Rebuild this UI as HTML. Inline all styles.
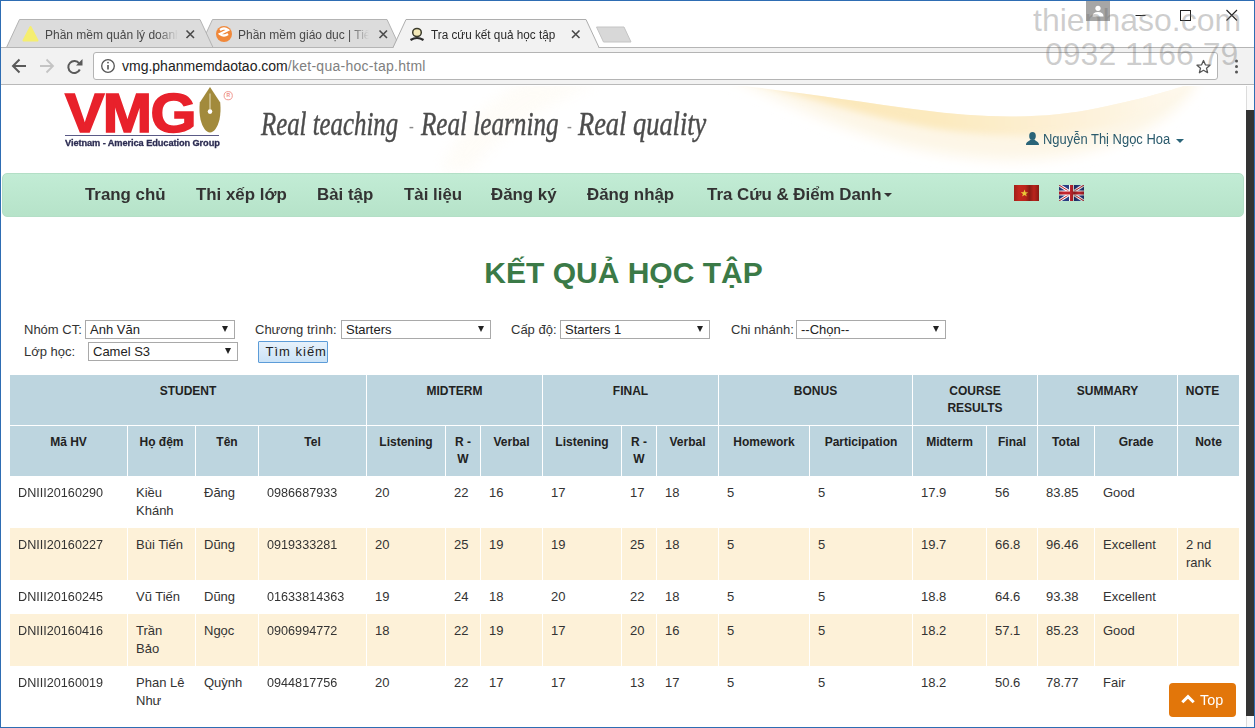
<!DOCTYPE html>
<html lang="vi">
<head>
<meta charset="utf-8">
<title>Tra cứu kết quả học tập</title>
<style>
*{box-sizing:border-box;margin:0;padding:0}
html,body{width:1255px;height:728px;overflow:hidden;background:#fff;font-family:"Liberation Sans",sans-serif;}
.abs{position:absolute}
.t{position:absolute;white-space:nowrap;line-height:1;transform-origin:0 0}
#win{position:absolute;left:0;top:0;width:1255px;height:728px;overflow:hidden;background:#fff}
/* chrome */
#chrome{position:absolute;left:0;top:0;width:1255px;height:86px;background:#fff}
#toolbar{position:absolute;left:1px;top:47px;width:1253px;height:38px;background:#f2f2f2;border-top:1px solid #b5b5b5;border-bottom:1px solid #b9b9b9}
#url{position:absolute;left:93px;top:52px;width:1125px;height:28px;background:#fff;border:1px solid #b4b4b4;border-radius:3px}
.tabtxt{font-size:12px;color:#484848}
/* page */
#page{position:absolute;left:1px;top:86px;width:1245px;height:641px;background:#fff;overflow:hidden}
#nav{position:absolute;left:1px;top:87px;width:1242px;height:44px;border-radius:5px;background:linear-gradient(#c2ecd5,#b6e3c9);border:1px solid #b3dfc6}
.nv{font-weight:bold;font-size:17px;color:#333;top:100px}
.lbl{font-size:13px;color:#333}
.sel{position:absolute;height:19px;width:150px;border:1px solid #a9a9a9;background:#fff;border-radius:0}
.sel span{position:absolute;left:4px;top:2px;font-size:13px;line-height:1;color:#222;white-space:nowrap}
.sel i{position:absolute;right:6px;top:5px;width:0;height:0;border-left:3.5px solid transparent;border-right:3.5px solid transparent;border-top:6px solid #222}
/* table */
#tbl{position:absolute;left:9px;top:289px;width:1230px;}
.c{position:absolute;font-size:13px;color:#333;line-height:18px}
.h{position:absolute;background:#bdd5df;font-weight:bold;font-size:12px;color:#222;text-align:center;line-height:17px;padding-top:8px}
.odd{position:absolute;left:9px;width:1230px;background:#fdf2d9}
</style>
</head>
<body>
<div id="win">
<div id="chrome">
<svg class="abs" style="left:0;top:0" width="1255" height="48" viewBox="0 0 1255 48">
<polygon points="199.5,47.5 212.5,19.5 387,19.5 400,47.5" fill="#dcdcdc" stroke="#b3b3b3" stroke-width="1"/>
<polygon points="6.5,47.5 19.5,19.5 200,19.5 213,47.5" fill="#dcdcdc" stroke="#b3b3b3" stroke-width="1"/>
<polygon points="596.5,27 624,27 631,42 603.5,42" fill="#d8d8d8" stroke="#c4c4c4" stroke-width="1"/>
<rect x="1086" y="1" width="24" height="20" fill="#a6a6a6"/>
<circle cx="1098" cy="8.3" r="2.6" fill="#fff"/><path d="M1092.5 16.5 q0 -4.5 5.5 -4.5 q5.5 0 5.5 4.5z" fill="#fff"/>
<path d="M1135.5 15.5h10" stroke="#222" stroke-width="1"/>
<rect x="1180.5" y="10.5" width="10" height="10" fill="none" stroke="#222" stroke-width="1"/>
<path d="M1226.5 10 l10.5 10.5 M1237 10 l-10.5 10.5" stroke="#222" stroke-width="1.1"/>
</svg>
<div id="toolbar"></div>
<svg class="abs" style="left:0;top:0" width="1255" height="49" viewBox="0 0 1255 49">
<polygon points="393,48.5 406,19.5 586,19.5 599,48.5" fill="#f2f2f2"/>
<polyline points="393,47.5 406,19.5 586,19.5 599,47.5" fill="none" stroke="#adadad" stroke-width="1"/>
<!-- favicons -->
<polygon points="30.500,27 37.500,40.500 23.500,40.500" fill="#f5ee70" stroke="#f5ee70" stroke-width="2" stroke-linejoin="round"/>
<circle cx="224" cy="34" r="8" fill="#f0883a"/>
<path d="M220 30 q4-3 8 0 q-6 3 -8 4 q4 3 8 0" stroke="#fff" stroke-width="2.2" fill="none"/>
<ellipse cx="417" cy="32.500" rx="4.300" ry="4" fill="#f4e9b8" stroke="#3b3b2b" stroke-width="1.500"/>
<path d="M410.500 40 q6.500-4 13 0" stroke="#2b2b2b" stroke-width="2.200" fill="none"/>
<!-- close x -->
<g stroke="#4a4a4a" stroke-width="1.6">
<path d="M186.500 30.5l7.5 7.5m0-7.500l-7.500 7.500"/>
<path d="M379.500 30.5l7.500 7.500m0-7.500l-7.500 7.500"/>
<path d="M572 30.5l7.500 7.500m0-7.500l-7.500 7.500"/>
</g>
</svg>
<span class="t tabtxt" style="left:45px;top:28px;width:133px;overflow:hidden;-webkit-mask-image:linear-gradient(90deg,#000 85%,transparent);line-height:14px;">Phần mềm quản lý doanh</span>
<span class="t tabtxt" style="left:238px;top:28px;width:131px;overflow:hidden;-webkit-mask-image:linear-gradient(90deg,#000 85%,transparent);line-height:14px;">Phần mềm giáo dục | Tiếng</span>
<span class="t tabtxt" style="left:431px;top:28px;line-height:14px;color:#2a2a2a;transform:scaleX(0.978);">Tra cứu kết quả học tập</span>
<svg class="abs" style="left:0;top:48px" width="1255" height="38" viewBox="0 48 1255 38">
<g fill="none" stroke="#5a5a5a" stroke-width="1.8">
<path d="M26 66H13.500M19.500 59.500L13 66l6.500 6.500" stroke-width="2"/>
<path d="M79.800 69.500a6 6 0 1 1 -.6-6" stroke-width="2"/>
</g>
<path d="M82.500 59v6.500h-6.500z" fill="#5a5a5a"/>
<g fill="none" stroke="#c4c4c4" stroke-width="1.800"><path d="M40 66h12.500M46.500 59.500L53 66l-6.500 6.500"/></g>
</svg>
<div id="url"></div>
<svg class="abs" style="left:0;top:48px" width="1255" height="38" viewBox="0 48 1255 38">
<circle cx="108" cy="66" r="6.300" fill="none" stroke="#555" stroke-width="1.300"/>
<path d="M108 65v4.500" stroke="#555" stroke-width="1.600"/><circle cx="108" cy="62.600" r="0.900" fill="#555"/>
<path d="M1203.500 60.500l1.900 4.300 4.600.4-3.500 3 1.100 4.500-4.100-2.400-4.100 2.400 1.100-4.500-3.500-3 4.600-.4z" fill="none" stroke="#555" stroke-width="1.300" stroke-linejoin="round"/>
<circle cx="1236.500" cy="61" r="1.500" fill="#555"/><circle cx="1236.500" cy="66.500" r="1.500" fill="#555"/><circle cx="1236.500" cy="72" r="1.500" fill="#555"/>
</svg>
<span class="t " style="left:122px;top:58px;font-size:14px;color:#222;line-height:16px;">vmg.phanmemdaotao.com<span style="color:#808080;letter-spacing:.27px">/ket-qua-hoc-tap.html</span></span>
<span class="t wm" style="left:1033px;top:2px;font-size:32px;line-height:37px;color:rgba(110,110,110,.34);z-index:50;">thienhaso.com</span>
<span class="t wm" style="left:1045px;top:35.5px;font-size:32px;line-height:37px;color:rgba(110,110,110,.34);z-index:50;">0932 1166 79</span>
</div>
<div id="page">
<svg class="abs" style="left:0;top:0" width="1245" height="90" viewBox="0 0 1245 90">
<defs>
<linearGradient id="swg" x1="745" y1="0" x2="1185" y2="0" gradientUnits="userSpaceOnUse"><stop offset="0" stop-color="#fbe6b6"/><stop offset=".45" stop-color="#fceabf"/><stop offset=".75" stop-color="#fdf1d8"/><stop offset="1" stop-color="#fef9ee"/></linearGradient>
<filter id="bl" x="-10%" y="-50%" width="120%" height="200%"><feGaussianBlur stdDeviation="3.5"/></filter>
<filter id="bl2" x="-10%" y="-50%" width="120%" height="200%"><feGaussianBlur stdDeviation="7"/></filter>
</defs>
<clipPath id="cpu"><path d="M700 -1 L734 -1 C 790 5, 860 16, 920 24 S 1040 34, 1097 22 S 1170 4, 1186 -1 L1245 -1 L1245 90 L700 90 Z"/></clipPath>
<g clip-path="url(#cpu)">
<path d="M720 -14 C 790 -6, 860 6, 920 14 S 1040 24, 1097 12 S 1170 -6, 1200 -14 C 1180 40, 1090 82, 980 72 S 800 22, 720 -14 Z" fill="#fdf6e6" filter="url(#bl2)"/>
<path d="M725 -12 C 790 -4, 860 8, 920 16 S 1040 26, 1097 14 S 1170 -4, 1196 -12 C 1160 36, 1080 56, 980 48 S 810 10, 725 -12 Z" fill="url(#swg)" filter="url(#bl)"/>
</g>
<path d="M520 -5 C 470 30, 450 55, 440 85 L 470 85 C 490 55, 540 20, 600 -5 Z" fill="#fdf5e4" opacity=".28" filter="url(#bl2)"/>
</svg>
<span class="t " style="left:63.5px;top:-3.5px;font-weight:bold;font-size:55px;line-height:60px;color:#e8212b;letter-spacing:-1.5px;-webkit-text-stroke:1.6px #e8212b;transform:scaleX(1.075);">VMG</span>
<svg class="abs" style="left:196px;top:0px" width="40" height="50" viewBox="197 86 40 50">
<path d="M210 87 L220.200 102.500 C220.700 108,220.700 114,219.500 119.500 C217.500 127.500,214 132.400,210 132.400 C206 132.400,202.500 127.500,200.500 119.500 C199.300 114,199.300 108,199.800 102.500 Z" fill="#a28a3c"/>
<path d="M210 93.500v17" stroke="#f3ecd2" stroke-width="0.900"/><circle cx="210" cy="111.600" r="2.300" fill="#fff"/>
<circle cx="228.200" cy="95.700" r="4.100" fill="none" stroke="#ee8f86" stroke-width="0.900"/>
</svg>
<span class="t " style="left:225.4px;top:7.3px;font-size:5px;font-weight:bold;color:#ee8f86;">R</span>
<div class="abs" style="left:64px;top:49px;width:154px;height:1px;background:#5a5a86"></div>
<span class="t " style="left:64px;top:51px;font-weight:bold;font-size:9.500px;color:#2c2c52;line-height:11px;letter-spacing:-.1px;-webkit-text-stroke:.3px #2c2c52;transform:scaleX(0.975);">Vietnam - America Education Group</span>
<span class="t slog" style="left:260px;top:19.5px;font-family:'Liberation Serif',serif;font-style:italic;font-size:33px;line-height:36px;color:#4c4c4c;-webkit-text-stroke:.45px #4c4c4c;transform:scaleX(0.752);">Real teaching</span>
<span class="t slog" style="left:407.5px;top:30px;font-family:'Liberation Serif',serif;font-size:18px;line-height:20px;color:#8a8a8a;transform:scaleX(0.8);">-</span>
<span class="t slog" style="left:419.5px;top:19.5px;font-family:'Liberation Serif',serif;font-style:italic;font-size:33px;line-height:36px;color:#4c4c4c;-webkit-text-stroke:.45px #4c4c4c;transform:scaleX(0.762);">Real learning</span>
<span class="t slog" style="left:565.5px;top:30px;font-family:'Liberation Serif',serif;font-size:18px;line-height:20px;color:#8a8a8a;transform:scaleX(0.8);">-</span>
<span class="t slog" style="left:577px;top:19.5px;font-family:'Liberation Serif',serif;font-style:italic;font-size:33px;line-height:36px;color:#4c4c4c;-webkit-text-stroke:.45px #4c4c4c;transform:scaleX(0.8);">Real quality</span>
<svg class="abs" style="left:1024px;top:46px" width="15" height="14" viewBox="0 0 15 14">
<ellipse cx="7.500" cy="4" rx="3.300" ry="3.900" fill="#2a6478"/>
<path d="M1 13 C1 9.500,4 9.500,5.500 7.500 h4 C11 9.500,14 9.500,14 13z" fill="#2a6478"/></svg>
<span class="t " style="left:1042px;top:45px;font-size:14px;line-height:16px;color:#2a5a6c;transform:scaleX(0.925);">Nguyễn Thị Ngọc Hoa</span>
<div class="abs" style="left:1175px;top:53px;border-left:4px solid transparent;border-right:4px solid transparent;border-top:4px solid #2a6478"></div>
<div id="nav"></div>
<span class="t nv" style="left:84px;top:99px;line-height:20px;transform:scaleX(0.992);">Trang chủ</span>
<span class="t nv" style="left:195px;top:99px;line-height:20px;transform:scaleX(0.992);">Thi xếp lớp</span>
<span class="t nv" style="left:316px;top:99px;line-height:20px;transform:scaleX(0.992);">Bài tập</span>
<span class="t nv" style="left:403px;top:99px;line-height:20px;transform:scaleX(0.992);">Tài liệu</span>
<span class="t nv" style="left:490px;top:99px;line-height:20px;transform:scaleX(0.992);">Đăng ký</span>
<span class="t nv" style="left:586px;top:99px;line-height:20px;transform:scaleX(0.992);">Đăng nhập</span>
<span class="t nv" style="left:706px;top:99px;line-height:20px;transform:scaleX(0.993);">Tra Cứu &amp; Điểm Danh</span>
<div class="abs" style="left:882.500px;top:107px;border-left:4px solid transparent;border-right:4px solid transparent;border-top:4px solid #333"></div>
<svg class="abs" style="left:1013px;top:99px" width="25" height="16" viewBox="0 0 25 16"><defs><linearGradient id="wv" x1="0" x2="1" y1="0" y2="0"><stop offset="0" stop-color="#000" stop-opacity=".18"/><stop offset=".2" stop-color="#000" stop-opacity="0"/><stop offset=".45" stop-color="#000" stop-opacity=".05"/><stop offset=".62" stop-color="#000" stop-opacity=".3"/><stop offset=".8" stop-color="#000" stop-opacity=".05"/><stop offset="1" stop-color="#000" stop-opacity=".3"/></linearGradient></defs><rect width="25" height="16" fill="#c4261d"/><polygon points="10.500,4.500 11.500,7.200 14.300,7.200 12,8.900 12.900,11.600 10.500,10 8.100,11.600 9,8.900 6.700,7.200 9.500,7.200" fill="#f6d13a"/><rect width="25" height="16" fill="url(#wv)"/></svg>
<svg class="abs" style="left:1058px;top:99px" width="25" height="16" viewBox="0 0 25 16"><rect width="25" height="16" fill="#2b3f86"/><path d="M0 0L25 16M25 0L0 16" stroke="#fff" stroke-width="3"/><path d="M0 0L25 16M25 0L0 16" stroke="#c8262f" stroke-width="1"/><path d="M12.500 0v16M0 8h25" stroke="#fff" stroke-width="5"/><path d="M12.500 0v16M0 8h25" stroke="#c8262f" stroke-width="3"/><rect width="25" height="16" fill="url(#wv)"/></svg>
<span class="t " style="left:0px;top:168.5px;left:0;width:1245px;text-align:center;font-weight:bold;font-size:30px;line-height:36px;color:#3b7a47;">KẾT QUẢ HỌC TẬP</span>
<span class="t lbl" style="left:23px;top:236px;line-height:16px;">Nhóm CT:</span>
<div class="sel" style="left:84px;top:234px"><span>Anh Văn</span><i></i></div>
<span class="t lbl" style="left:254px;top:236px;line-height:16px;">Chương trình:</span>
<div class="sel" style="left:340px;top:234px"><span>Starters</span><i></i></div>
<span class="t lbl" style="left:510px;top:236px;line-height:16px;">Cấp độ:</span>
<div class="sel" style="left:559px;top:234px"><span>Starters 1</span><i></i></div>
<span class="t lbl" style="left:730px;top:236px;line-height:16px;">Chi nhánh:</span>
<div class="sel" style="left:795px;top:234px"><span>--Chọn--</span><i></i></div>
<span class="t lbl" style="left:23px;top:258px;line-height:16px;">Lớp học:</span>
<div class="sel" style="left:87px;top:256px"><span>Camel S3</span><i></i></div>
<div class="abs" style="left:257px;top:255px;width:70px;height:22px;border:1px solid #5c9cd8;background:linear-gradient(#e6f1fb,#cbe3f7);border-radius:1px"></div>
<span class="t " style="left:264.5px;top:258px;font-size:13px;line-height:16px;color:#222;letter-spacing:1px;">Tìm kiếm</span>
<div class="h" style="left:9px;top:289px;width:356px;height:50px">STUDENT</div>
<div class="h" style="left:366px;top:289px;width:175px;height:50px">MIDTERM</div>
<div class="h" style="left:542px;top:289px;width:175px;height:50px">FINAL</div>
<div class="h" style="left:718px;top:289px;width:193px;height:50px">BONUS</div>
<div class="h" style="left:912px;top:289px;width:124px;height:50px">COURSE<br>RESULTS</div>
<div class="h" style="left:1037px;top:289px;width:139px;height:50px">SUMMARY</div>
<div class="h" style="padding-right:12px;left:1177px;top:289px;width:61px;height:50px">NOTE</div>
<div class="h" style="left:9px;top:340px;width:117px;height:50px">Mã HV</div>
<div class="h" style="left:127px;top:340px;width:67px;height:50px">Họ đệm</div>
<div class="h" style="left:195px;top:340px;width:62px;height:50px">Tên</div>
<div class="h" style="left:258px;top:340px;width:107px;height:50px">Tel</div>
<div class="h" style="left:366px;top:340px;width:78px;height:50px">Listening</div>
<div class="h" style="left:445px;top:340px;width:34px;height:50px">R -<br>W</div>
<div class="h" style="left:480px;top:340px;width:61px;height:50px">Verbal</div>
<div class="h" style="left:542px;top:340px;width:78px;height:50px">Listening</div>
<div class="h" style="left:621px;top:340px;width:34px;height:50px">R -<br>W</div>
<div class="h" style="left:656px;top:340px;width:61px;height:50px">Verbal</div>
<div class="h" style="left:718px;top:340px;width:90px;height:50px">Homework</div>
<div class="h" style="left:809px;top:340px;width:102px;height:50px">Participation</div>
<div class="h" style="left:912px;top:340px;width:73px;height:50px">Midterm</div>
<div class="h" style="left:986px;top:340px;width:50px;height:50px">Final</div>
<div class="h" style="left:1037px;top:340px;width:56px;height:50px">Total</div>
<div class="h" style="left:1094px;top:340px;width:82px;height:50px">Grade</div>
<div class="h" style="left:1177px;top:340px;width:61px;height:50px">Note</div>
<div class="c" style="left:17px;top:398px;transform:scaleX(.972);transform-origin:0 0;">DNIII20160290</div>
<div class="c" style="left:135px;top:398px;">Kiều<br>Khánh</div>
<div class="c" style="left:203px;top:398px;">Đăng</div>
<div class="c" style="left:266px;top:398px;transform:scaleX(.972);transform-origin:0 0;">0986687933</div>
<div class="c" style="left:374px;top:398px;">20</div>
<div class="c" style="left:453px;top:398px;">22</div>
<div class="c" style="left:488px;top:398px;">16</div>
<div class="c" style="left:550px;top:398px;">17</div>
<div class="c" style="left:629px;top:398px;">17</div>
<div class="c" style="left:664px;top:398px;">18</div>
<div class="c" style="left:726px;top:398px;">5</div>
<div class="c" style="left:817px;top:398px;">5</div>
<div class="c" style="left:920px;top:398px;">17.9</div>
<div class="c" style="left:994px;top:398px;">56</div>
<div class="c" style="left:1045px;top:398px;">83.85</div>
<div class="c" style="left:1102px;top:398px;">Good</div>
<div class="abs" style="left:9px;top:442px;width:117px;height:52px;background:#fdf1d8"></div>
<div class="abs" style="left:127px;top:442px;width:67px;height:52px;background:#fdf1d8"></div>
<div class="abs" style="left:195px;top:442px;width:62px;height:52px;background:#fdf1d8"></div>
<div class="abs" style="left:258px;top:442px;width:107px;height:52px;background:#fdf1d8"></div>
<div class="abs" style="left:366px;top:442px;width:78px;height:52px;background:#fdf1d8"></div>
<div class="abs" style="left:445px;top:442px;width:34px;height:52px;background:#fdf1d8"></div>
<div class="abs" style="left:480px;top:442px;width:61px;height:52px;background:#fdf1d8"></div>
<div class="abs" style="left:542px;top:442px;width:78px;height:52px;background:#fdf1d8"></div>
<div class="abs" style="left:621px;top:442px;width:34px;height:52px;background:#fdf1d8"></div>
<div class="abs" style="left:656px;top:442px;width:61px;height:52px;background:#fdf1d8"></div>
<div class="abs" style="left:718px;top:442px;width:90px;height:52px;background:#fdf1d8"></div>
<div class="abs" style="left:809px;top:442px;width:102px;height:52px;background:#fdf1d8"></div>
<div class="abs" style="left:912px;top:442px;width:73px;height:52px;background:#fdf1d8"></div>
<div class="abs" style="left:986px;top:442px;width:50px;height:52px;background:#fdf1d8"></div>
<div class="abs" style="left:1037px;top:442px;width:56px;height:52px;background:#fdf1d8"></div>
<div class="abs" style="left:1094px;top:442px;width:82px;height:52px;background:#fdf1d8"></div>
<div class="abs" style="left:1177px;top:442px;width:61px;height:52px;background:#fdf1d8"></div>
<div class="c" style="left:17px;top:450px;transform:scaleX(.972);transform-origin:0 0;">DNIII20160227</div>
<div class="c" style="left:135px;top:450px;">Bùi Tiến</div>
<div class="c" style="left:203px;top:450px;">Dũng</div>
<div class="c" style="left:266px;top:450px;transform:scaleX(.972);transform-origin:0 0;">0919333281</div>
<div class="c" style="left:374px;top:450px;">20</div>
<div class="c" style="left:453px;top:450px;">25</div>
<div class="c" style="left:488px;top:450px;">19</div>
<div class="c" style="left:550px;top:450px;">19</div>
<div class="c" style="left:629px;top:450px;">25</div>
<div class="c" style="left:664px;top:450px;">18</div>
<div class="c" style="left:726px;top:450px;">5</div>
<div class="c" style="left:817px;top:450px;">5</div>
<div class="c" style="left:920px;top:450px;">19.7</div>
<div class="c" style="left:994px;top:450px;">66.8</div>
<div class="c" style="left:1045px;top:450px;">96.46</div>
<div class="c" style="left:1102px;top:450px;">Excellent</div>
<div class="c" style="left:1185px;top:450px;">2 nd<br>rank</div>
<div class="c" style="left:17px;top:502px;transform:scaleX(.972);transform-origin:0 0;">DNIII20160245</div>
<div class="c" style="left:135px;top:502px;">Vũ Tiến</div>
<div class="c" style="left:203px;top:502px;">Dũng</div>
<div class="c" style="left:266px;top:502px;transform:scaleX(.972);transform-origin:0 0;">01633814363</div>
<div class="c" style="left:374px;top:502px;">19</div>
<div class="c" style="left:453px;top:502px;">24</div>
<div class="c" style="left:488px;top:502px;">18</div>
<div class="c" style="left:550px;top:502px;">20</div>
<div class="c" style="left:629px;top:502px;">22</div>
<div class="c" style="left:664px;top:502px;">18</div>
<div class="c" style="left:726px;top:502px;">5</div>
<div class="c" style="left:817px;top:502px;">5</div>
<div class="c" style="left:920px;top:502px;">18.8</div>
<div class="c" style="left:994px;top:502px;">64.6</div>
<div class="c" style="left:1045px;top:502px;">93.38</div>
<div class="c" style="left:1102px;top:502px;">Excellent</div>
<div class="abs" style="left:9px;top:528px;width:117px;height:52px;background:#fdf1d8"></div>
<div class="abs" style="left:127px;top:528px;width:67px;height:52px;background:#fdf1d8"></div>
<div class="abs" style="left:195px;top:528px;width:62px;height:52px;background:#fdf1d8"></div>
<div class="abs" style="left:258px;top:528px;width:107px;height:52px;background:#fdf1d8"></div>
<div class="abs" style="left:366px;top:528px;width:78px;height:52px;background:#fdf1d8"></div>
<div class="abs" style="left:445px;top:528px;width:34px;height:52px;background:#fdf1d8"></div>
<div class="abs" style="left:480px;top:528px;width:61px;height:52px;background:#fdf1d8"></div>
<div class="abs" style="left:542px;top:528px;width:78px;height:52px;background:#fdf1d8"></div>
<div class="abs" style="left:621px;top:528px;width:34px;height:52px;background:#fdf1d8"></div>
<div class="abs" style="left:656px;top:528px;width:61px;height:52px;background:#fdf1d8"></div>
<div class="abs" style="left:718px;top:528px;width:90px;height:52px;background:#fdf1d8"></div>
<div class="abs" style="left:809px;top:528px;width:102px;height:52px;background:#fdf1d8"></div>
<div class="abs" style="left:912px;top:528px;width:73px;height:52px;background:#fdf1d8"></div>
<div class="abs" style="left:986px;top:528px;width:50px;height:52px;background:#fdf1d8"></div>
<div class="abs" style="left:1037px;top:528px;width:56px;height:52px;background:#fdf1d8"></div>
<div class="abs" style="left:1094px;top:528px;width:82px;height:52px;background:#fdf1d8"></div>
<div class="abs" style="left:1177px;top:528px;width:61px;height:52px;background:#fdf1d8"></div>
<div class="c" style="left:17px;top:536px;transform:scaleX(.972);transform-origin:0 0;">DNIII20160416</div>
<div class="c" style="left:135px;top:536px;">Trần<br>Bảo</div>
<div class="c" style="left:203px;top:536px;">Ngọc</div>
<div class="c" style="left:266px;top:536px;transform:scaleX(.972);transform-origin:0 0;">0906994772</div>
<div class="c" style="left:374px;top:536px;">18</div>
<div class="c" style="left:453px;top:536px;">22</div>
<div class="c" style="left:488px;top:536px;">19</div>
<div class="c" style="left:550px;top:536px;">17</div>
<div class="c" style="left:629px;top:536px;">20</div>
<div class="c" style="left:664px;top:536px;">16</div>
<div class="c" style="left:726px;top:536px;">5</div>
<div class="c" style="left:817px;top:536px;">5</div>
<div class="c" style="left:920px;top:536px;">18.2</div>
<div class="c" style="left:994px;top:536px;">57.1</div>
<div class="c" style="left:1045px;top:536px;">85.23</div>
<div class="c" style="left:1102px;top:536px;">Good</div>
<div class="c" style="left:17px;top:588px;transform:scaleX(.972);transform-origin:0 0;">DNIII20160019</div>
<div class="c" style="left:135px;top:588px;">Phan Lê<br>Như</div>
<div class="c" style="left:203px;top:588px;">Quỳnh</div>
<div class="c" style="left:266px;top:588px;transform:scaleX(.972);transform-origin:0 0;">0944817756</div>
<div class="c" style="left:374px;top:588px;">20</div>
<div class="c" style="left:453px;top:588px;">22</div>
<div class="c" style="left:488px;top:588px;">17</div>
<div class="c" style="left:550px;top:588px;">17</div>
<div class="c" style="left:629px;top:588px;">13</div>
<div class="c" style="left:664px;top:588px;">17</div>
<div class="c" style="left:726px;top:588px;">5</div>
<div class="c" style="left:817px;top:588px;">5</div>
<div class="c" style="left:920px;top:588px;">18.2</div>
<div class="c" style="left:994px;top:588px;">50.6</div>
<div class="c" style="left:1045px;top:588px;">78.77</div>
<div class="c" style="left:1102px;top:588px;">Fair</div>
<div class="abs" style="left:1168px;top:597px;width:67px;height:34px;border-radius:4px;background:#e2760a"></div>
<svg class="abs" style="left:1179.500px;top:608px" width="14" height="11" viewBox="0 0 14 11"><path d="M1.300 8.300L7 2.600 12.700 8.300" fill="none" stroke="#fff" stroke-width="3"/></svg>
<span class="t " style="left:1199px;top:605px;font-size:15px;line-height:17px;color:#fff;transform:scaleX(0.96);">Top</span>
</div>
<div class="abs" style="left:1246px;top:86px;width:8px;height:641px;background:#fafafa;border-left:1px solid #dcdcdc"></div>
<div class="abs" style="left:1246px;top:110px;width:8px;height:606px;background:#333"></div>
<div class="abs" style="left:0;top:0;width:1255px;height:728px;border:1px solid #2e6db3;border-top-color:#2e6db3;pointer-events:none;z-index:99"></div>
</div>
</body>
</html>
